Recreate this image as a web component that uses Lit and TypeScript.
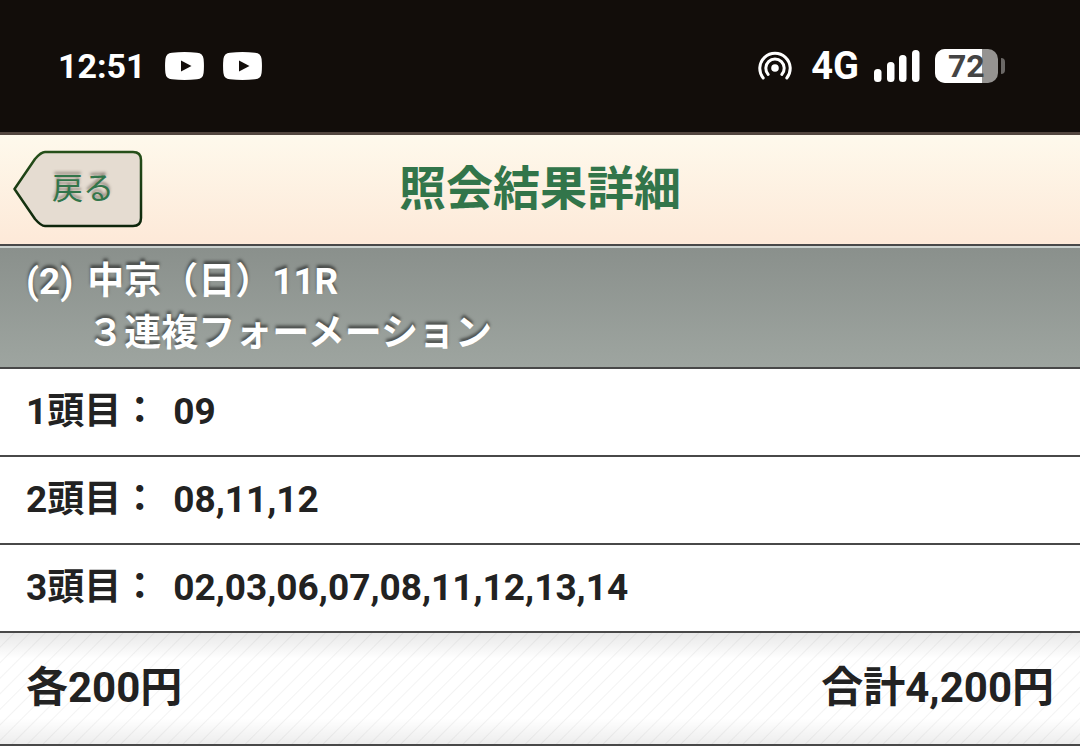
import { LitElement, html, css, svg } from "lit";
import { customElement } from "lit/decorators.js";

const entries = [
  { label: "1頭目：", horses: ["09"] },
  { label: "2頭目：", horses: ["08", "11", "12"] },
  { label: "3頭目：", horses: ["02", "03", "06", "07", "08", "11", "12", "13", "14"] },
];

const signal = [
  { x: 0, h: 13 },
  { x: 13, h: 20 },
  { x: 25, h: 27 },
  { x: 38, h: 32 },
];

@customElement("status-bar")
class StatusBar extends LitElement {
  static styles = css`
    :host {
      display: flex;
      align-items: center;
      height: 132px;
      padding: 0 74px 0 58px;
      box-sizing: border-box;
      background: #120d0a;
      color: #fff;
      font: 700 34px/40px Roboto, "Liberation Sans", sans-serif;
    }
    .left, .right { display: flex; align-items: center; }
    .left { gap: 19px; }
    .right { margin-left: auto; gap: 15px; }
    .network { font-size: 38px; margin-left: 4px; }
    svg { display: block; }
    .battery { display: grid; font-size: 32px; }
    .battery svg, .battery span { grid-area: 1 / 1; }
    .battery span {
      align-self: center;
      padding-left: 13px;
      line-height: 34px;
      color: #444;
    }
  `;

  private video() {
    return html`<svg width="39" height="28" viewBox="0 0 39 28" aria-hidden="true">
      <path fill="#fff" d="M7 .8Q19.500-.6 32 .8Q38 1.200 38.600 7Q39.300 14 38.600 21Q38 26.800 32 27.200Q19.500 28.600 7 27.200Q1 26.800.4 21Q-.3 14 .4 7Q1 1.200 7 .8Z"/>
      <path fill="#120d0a" d="M16 8.500L26.500 14L16 19.500Z"/>
    </svg>`;
  }

  render() {
    return html`
      <div class="left">
        <time>12:51</time>
        ${this.video()}${this.video()}
      </div>
      <div class="right">
        <svg width="34" height="34" viewBox="0 0 34 34" fill="none" stroke="#fff" stroke-width="3" stroke-linecap="round" aria-hidden="true">
          <circle cx="17" cy="19" r="3.800" fill="#fff" stroke="none"/>
          <path d="M10.200 25.500A9.200 9.200 0 1 1 23.800 25.500"/>
          <path d="M5.200 29A15.200 15.200 0 1 1 28.800 29"/>
        </svg>
        <span class="network">4G</span>
        <svg width="46" height="32" viewBox="0 0 46 32" fill="#fff" aria-hidden="true">
          ${signal.map((b) => svg`<rect x=${b.x} y=${32 - b.h} width="7.500" height=${b.h} rx="3.500"/>`)}
        </svg>
        <div class="battery">
          <svg width="71" height="34" viewBox="0 0 71 34" aria-hidden="true">
            <defs><clipPath id="cell"><rect width="63" height="34" rx="10"/></clipPath></defs>
            <g clip-path="url(#cell)">
              <rect width="63" height="34" fill="#959391"/>
              <rect width="47" height="34" fill="#fff"/>
            </g>
            <path d="M66 9Q70 9 70 13V21Q70 25 66 25Z" fill="#6b6866"/>
          </svg>
          <span>72</span>
        </div>
      </div>
    `;
  }
}

@customElement("app-root")
class AppRoot extends LitElement {
  static styles = css`
    :host {
      display: block;
      min-height: 100vh;
      background: #fff;
      color: #222;
      font: 700 37px/52px Roboto, "Noto Sans CJK JP", sans-serif;
    }
    header {
      display: grid;
      grid-template-columns: 1fr auto 1fr;
      align-items: center;
      height: 114px;
      box-sizing: border-box;
      padding: 0 13px 2px;
      border-top: 3px solid #53463f;
      border-bottom: 2px solid #484848;
      background: linear-gradient(#fef9ec, #fde9d8);
    }
    h1 {
      margin: 0;
      color: #32754a;
      font-size: 47px;
      line-height: 60px;
    }
    .back {
      display: grid;
      justify-self: start;
      padding: 0;
      border: 0;
      background: none;
      color: #32754a;
      font: 400 31px/40px "Noto Sans CJK JP", sans-serif;
      text-shadow: 0 -3px 3px rgba(60, 50, 40, 0.5);
      cursor: pointer;
    }
    .back svg, .back span { grid-area: 1 / 1; }
    .back svg { display: block; }
    .back span { padding: 16px 0 0 10px; }
    h2 {
      display: flex;
      gap: 14px;
      margin: 0;
      padding: 8px 26px 7px;
      border-top: 2px solid #ccd2cf;
      border-bottom: 2px solid #484848;
      background: linear-gradient(#8a908c, #9ea5a0);
      color: #fff;
      font-size: 37px;
      line-height: 52px;
      text-shadow: 0 -3px 3px rgba(0, 0, 0, 0.5);
    }
    h2 .race, h2 .kind { display: block; }
    dl { margin: 0; }
    .row {
      display: flex;
      gap: 15px;
      padding: 17px 26px;
      border-bottom: 2px solid #484848;
    }
    dt { white-space: nowrap; }
    dd { margin: 0; min-width: 0; overflow-wrap: anywhere; }
    footer {
      display: flex;
      justify-content: space-between;
      padding: 27px 26px 28px;
      border-bottom: 2px solid #484848;
      background:
        linear-gradient(rgba(0, 0, 0, 0.09), transparent 26px, transparent calc(100% - 26px), rgba(0, 0, 0, 0.07)),
        repeating-linear-gradient(135deg, #fff 0 9px, #f3f3f3 10px, #fff 11px);
      font-size: 42px;
      line-height: 56px;
    }
  `;

  render() {
    return html`
      <status-bar></status-bar>
      <header>
        <button class="back" type="button">
          <svg width="130" height="78" viewBox="0 0 130 78" aria-hidden="true">
            <defs>
              <linearGradient id="edge" x1="0" y1="0" x2="0" y2="1">
                <stop offset="0" stop-color="#26501a"/>
                <stop offset="1" stop-color="#0d260c"/>
              </linearGradient>
            </defs>
            <path d="M1.500 39L22 9Q28 2 32 2H120Q128 2 128 10V68Q128 76 120 76H32Q28 76 22 69Z" fill="#e5dcd1" stroke="url(#edge)" stroke-width="2.500" stroke-linejoin="round"/>
          </svg>
          <span>戻る</span>
        </button>
        <h1>照会結果詳細</h1>
      </header>
      <main>
        <h2>
          <span>(2)</span>
          <span>
            <span class="race">中京（日）11R</span>
            <span class="kind">３連複フォーメーション</span>
          </span>
        </h2>
        <dl>
          ${entries.map((e) => html`
            <div class="row"><dt>${e.label}</dt><dd>${e.horses.join(",")}</dd></div>
          `)}
        </dl>
        <footer><span>各200円</span><span>合計4,200円</span></footer>
      </main>
    `;
  }
}
